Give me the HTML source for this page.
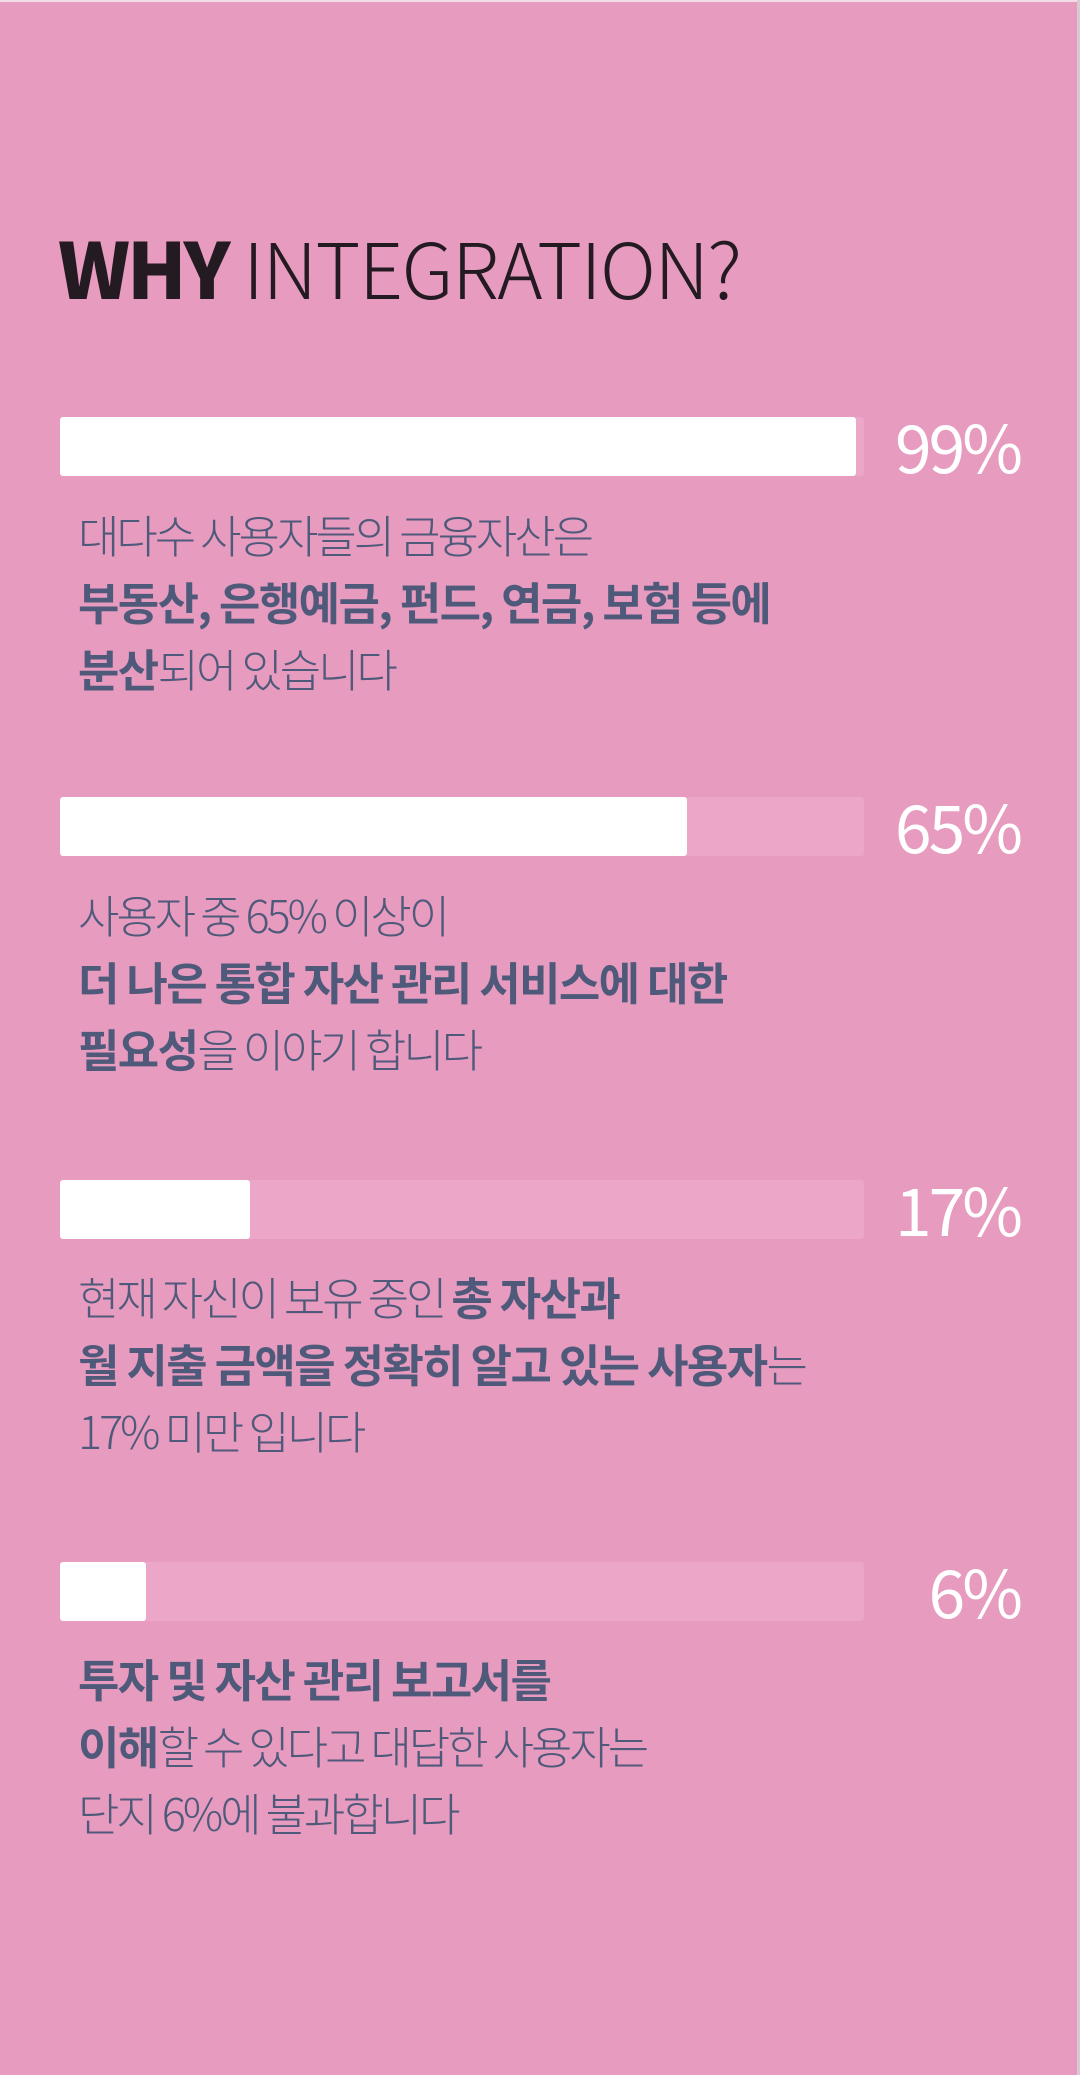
<!DOCTYPE html>
<html><head><meta charset="utf-8"><style>
html,body{margin:0;padding:0;}
body{width:1080px;height:2075px;background:#e79bbf;position:relative;overflow:hidden;font-family:"Liberation Sans","Noto Sans CJK KR",sans-serif;}
.edge{position:absolute;right:0;top:0;width:3px;height:2075px;background:#d9c9d1;}
.topl{position:absolute;left:0;top:0;width:1080px;height:2px;background:#f0dde6;}
.title{position:absolute;left:58px;top:222px;font-size:77px;line-height:90px;color:#231a22;white-space:nowrap;font-family:"Noto Sans CJK KR",sans-serif;letter-spacing:-1.5px;}
.title b{font-weight:900;letter-spacing:-3px;}
.title span{font-weight:300;}
.track{position:absolute;left:60px;width:804px;height:59px;background:#eba6c8;border-radius:3px;}
.fill{position:absolute;left:0;top:0;height:100%;background:#fff;border-radius:3px;}
.pct{position:absolute;right:60px;font-size:66px;color:#fff;font-family:"Noto Sans CJK KR",sans-serif;font-weight:400;letter-spacing:-3px;line-height:80px;}
.txt{position:absolute;left:78px;font-size:45px;line-height:67px;color:#4f5a7b;font-family:"Noto Sans CJK KR",sans-serif;font-weight:300;letter-spacing:-3px;white-space:nowrap;}
.txt b{font-weight:700;letter-spacing:-1.6px;}
</style></head><body>
<div class="topl"></div>
<div class="edge"></div>
<div class="title"><b>WHY</b> <span>INTEGRATION?</span></div>

<div class="track" style="top:417px"><div class="fill" style="width:796px"></div></div>
<div class="pct" style="top:405px">99%</div>
<div class="txt" style="top:500px">대다수 사용자들의 금융자산은<br><b>부동산, 은행예금, 펀드, 연금, 보험 등에</b><br><b>분산</b>되어 있습니다</div>

<div class="track" style="top:797px"><div class="fill" style="width:627px"></div></div>
<div class="pct" style="top:785px">65%</div>
<div class="txt" style="top:880px">사용자 중 65% 이상이<br><b>더 나은 통합 자산 관리 서비스에 대한</b><br><b>필요성</b>을 이야기 합니다</div>

<div class="track" style="top:1180px"><div class="fill" style="width:190px"></div></div>
<div class="pct" style="top:1168px">17%</div>
<div class="txt" style="top:1262px">현재 자신이 보유 중인 <b>총 자산과</b><br><b>월 지출 금액을 정확히 알고 있는 사용자</b>는<br>17% 미만 입니다</div>

<div class="track" style="top:1562px"><div class="fill" style="width:86px"></div></div>
<div class="pct" style="top:1550px">6%</div>
<div class="txt" style="top:1644px"><b>투자 및 자산 관리 보고서를</b><br><b>이해</b>할 수 있다고 대답한 사용자는<br>단지 6%에 불과합니다</div>
</body></html>
